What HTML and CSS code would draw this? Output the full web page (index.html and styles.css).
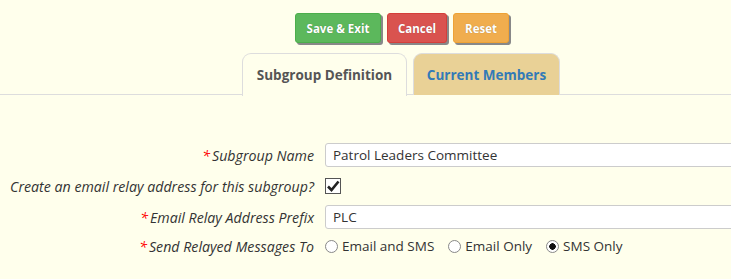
FILE: index.html
```html
<!DOCTYPE html>
<html>
<head>
  <title>Edit Subgroup</title>
  <link rel="stylesheet" href="styles.css">
</head>
<body>
  <div class="toolbar">
    <button class="btn btn-save">Save &amp; Exit</button>
    <button class="btn btn-cancel">Cancel</button>
    <button class="btn btn-reset">Reset</button>
  </div>

  <ul class="tabs">
    <li class="tab active">Subgroup Definition</li>
    <li class="tab">Current Members</li>
  </ul>

  <div class="form">
    <div class="row">
      <label class="caption"><span class="req">*</span>Subgroup Name</label>
      <input type="text" class="field" value="Patrol Leaders Committee">
    </div>
    <div class="row">
      <label class="caption">Create an email relay address for this subgroup?</label>
      <span class="check">
        <svg width="14" height="14" viewBox="0 0 14 14"><path d="M2 7.5 L5.5 11 L12.5 2.5" fill="none" stroke="#222" stroke-width="2.6"/></svg>
      </span>
    </div>
    <div class="row">
      <label class="caption"><span class="req">*</span>Email Relay Address Prefix</label>
      <input type="text" class="field" value="PLC">
    </div>
    <div class="row row-short">
      <label class="caption"><span class="req">*</span>Send Relayed Messages To</label>
      <div class="radios">
        <label class="opt"><input type="radio" name="relay"> Email and SMS</label>
        <label class="opt"><input type="radio" name="relay"> Email Only</label>
        <label class="opt"><input type="radio" name="relay" checked> SMS Only</label>
      </div>
    </div>
  </div>
</body>
</html>
```

FILE: styles.css
```css
body {
  margin: 0;
  background-color: #ffffec;
  font-family: "Open Sans", sans-serif;
  color: #333;
  overflow: hidden;
}

.toolbar {
  display: flex;
  gap: 6px;
  padding: 13px 0 0 295px;
}

.btn {
  font-family: "Open Sans", sans-serif;
  font-size: 11.5px;
  font-weight: bold;
  color: white;
  border: 1px solid transparent;
  border-radius: 3px;
  height: 30px;
  padding: 0 10px;
  box-shadow: 2px 2px 0 #888;
  text-shadow: 0 0 1px rgba(0, 0, 0, 0.3);
}

.btn-save {
  background-color: #5cb85c;
  border-color: #4cae4c;
  width: 86px;
}

.btn-cancel {
  background-color: #d9534f;
  border-color: #d43f3a;
  width: 60px;
}

.btn-reset {
  background-color: #f0ad4e;
  border-color: #eea236;
  width: 56px;
}

.tabs {
  list-style: none;
  margin: 10px 0 0 0;
  padding: 0 0 0 242px;
  display: flex;
  gap: 6px;
  border-bottom: 1px solid #ddd;
  height: 41px;
}

.tab {
  font-size: 13.5px;
  font-weight: bold;
  color: #337ab7;
  background-color: #e9d196;
  border: 1px solid #ddd;
  border-bottom: none;
  border-radius: 9px 9px 0 0;
  width: 145px;
  display: flex;
  align-items: center;
  justify-content: center;
  height: 41px;
}

.tab.active {
  color: #555;
  background-color: #ffffec;
  width: 163px;
  height: 42px;
}

.form {
  padding-top: 48px;
  display: flex;
  flex-direction: column;
  gap: 7px;
}

.row {
  display: grid;
  grid-template-columns: 314px 1fr;
  column-gap: 11px;
  align-items: center;
  min-height: 24px;
}

.row-short {
  min-height: 20px;
}

.caption {
  text-align: right;
  font-style: italic;
  font-size: 14.2px;
  white-space: nowrap;
}

.req {
  color: red;
  margin-right: 2px;
}

.field {
  height: 24px;
  box-sizing: border-box;
  border: 1px solid #ccc;
  border-radius: 3px;
  padding: 0 7px;
  font-family: "Open Sans", sans-serif;
  font-size: 13.5px;
  color: #333;
  background: white;
  width: 420px;
}

.check {
  width: 14px;
  height: 14px;
  border: 1px solid #555;
  background: white;
  display: flex;
  align-items: center;
  justify-content: center;
}

.radios {
  display: flex;
  gap: 14px;
  font-size: 13.5px;
}

.opt {
  display: flex;
  align-items: center;
  gap: 4px;
}

.opt input {
  appearance: none;
  margin: 0;
  width: 13px;
  height: 13px;
  border: 1px solid #888;
  border-radius: 50%;
  background: white;
}

.opt input:checked {
  background: radial-gradient(circle, #111 0 3px, white 3.5px);
}
```
